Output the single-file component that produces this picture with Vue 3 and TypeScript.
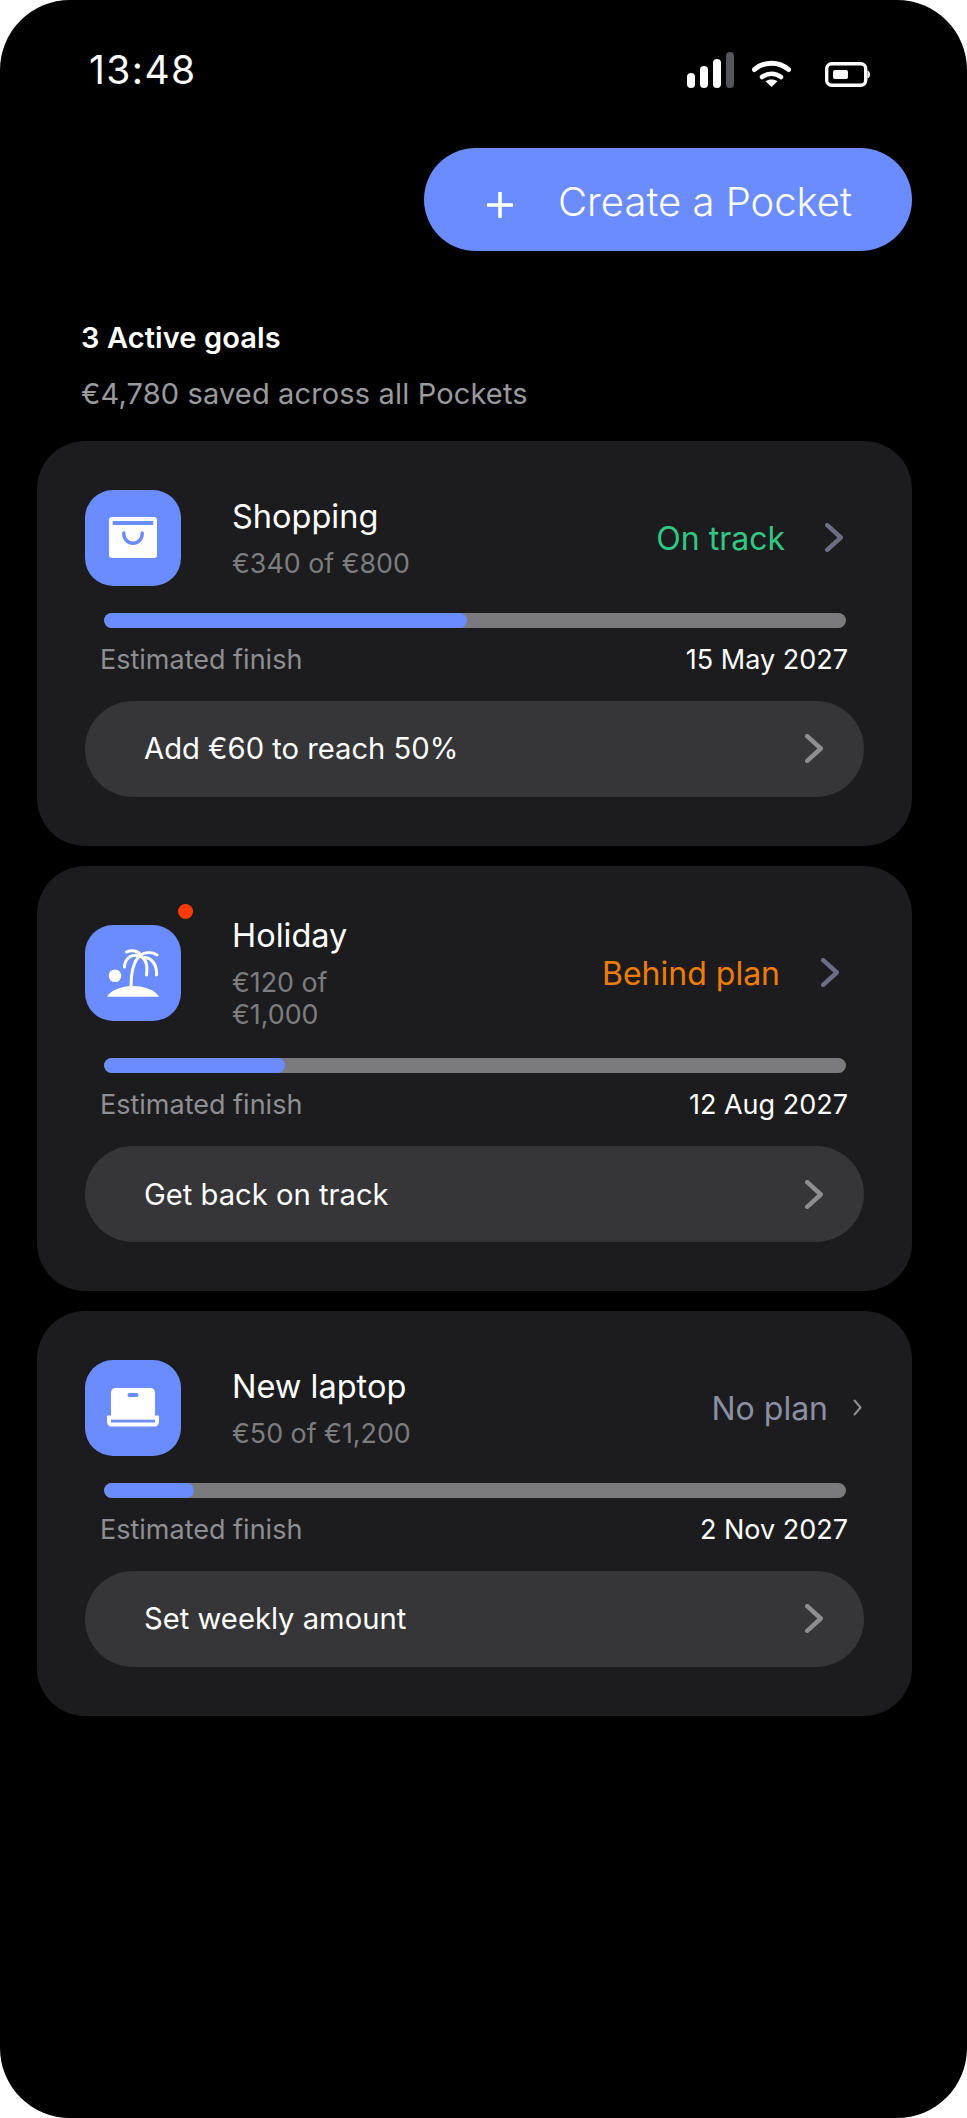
<template>
  <div class="phone">
    <!-- Status bar -->
    <div class="status-bar">
      <span class="clock">13:48</span>
      <div class="status-icons">
        <div class="signal">
          <i class="sig sig-1"></i>
          <i class="sig sig-2"></i>
          <i class="sig sig-3"></i>
          <i class="sig sig-4"></i>
        </div>
        <svg class="wifi" width="39" height="29" viewBox="0 0 39 29" fill="none">
          <path d="M2.5 11.5C12 3 27 3 36.5 11.5" stroke="#fff" stroke-width="5" stroke-linecap="round" />
          <path d="M10 19C15.500 14.500 23.500 14.500 29 19" stroke="#fff" stroke-width="4.500" stroke-linecap="round" />
          <path d="M19.500 29L13.500 23.300C17 20.800 22 20.800 25.500 23.300Z" fill="#fff" />
        </svg>
        <svg class="battery" width="45" height="25" viewBox="0 0 45 25" fill="none">
          <rect x="1.700" y="1.700" width="39" height="21.600" rx="5" stroke="#fff" stroke-width="3.400" />
          <rect x="8" y="8" width="15" height="9" rx="2" fill="#fff" />
          <path d="M42.500 8.500C44.500 9.500 45 11 45 12.500S44.500 15.500 42.500 16.500Z" fill="#fff" />
        </svg>
      </div>
    </div>

    <div class="actions">
      <button class="create-btn">
        <svg class="plus" width="26" height="26" viewBox="0 0 26 26" fill="none">
          <path d="M13 1V25M1 13H25" stroke="#fff" stroke-width="3.600" stroke-linecap="round" />
        </svg>
        <span>Create a Pocket</span>
      </button>
    </div>

    <div class="summary">
      <p class="summary-title">3 Active goals</p>
      <p class="summary-sub">€4,780 saved across all Pockets</p>
    </div>

    <div class="cards">
      <section v-for="goal in goals" :key="goal.name" class="card">
        <div class="card-head">
          <div class="goal-icon">
            <span v-if="goal.alert" class="alert-dot"></span>
            <svg v-if="goal.icon === 'bag'" width="48" height="41" viewBox="0 0 48 41">
              <rect width="48" height="41" rx="3" fill="#fff" />
              <rect x="3.700" y="4" width="40.500" height="4" fill="#6b8cff" />
              <path d="M14.800 16V17A9.200 9.200 0 0 0 33.200 17V16" fill="none" stroke="#6b8cff" stroke-width="3.400" stroke-linecap="round" />
            </svg>
            <svg v-else-if="goal.icon === 'palm'" width="52" height="48" viewBox="0 0 52 48" fill="none">
              <circle cx="8" cy="26.700" r="6.300" fill="#fff" />
              <path d="M0 47.800C2.500 42 14 37 26 37S49.500 42 52 47.800Z" fill="#fff" />
              <g stroke="#fff" stroke-width="3" stroke-linecap="round">
                <path d="M24 37C24 24 26 14 32 7" />
                <path d="M31 6.500C23 5 17.500 11 17.500 18" />
                <path d="M19.500 3C25 0.500 31 1.500 34 6.500" />
                <path d="M31 6.500C38 8 41 15 39.500 26" />
                <path d="M33 6.500C37 3 45 2.500 50 6" />
                <path d="M38 8.500C45 9 50 16 49.500 26" />
              </g>
            </svg>
            <svg v-else width="52" height="39" viewBox="0 0 52 39">
              <path d="M4 31V4.500A4.500 4.500 0 0 1 8.500 0H43.500A4.500 4.500 0 0 1 48 4.500V31Z" fill="#fff" />
              <rect x="20.500" y="5" width="11" height="4" rx="2" fill="#6b8cff" />
              <path d="M0 28.500A1 1 0 0 1 1 27.500H51A1 1 0 0 1 52 28.500V34A4.500 4.500 0 0 1 47.500 38.500H4.500A4.500 4.500 0 0 1 0 34Z" fill="#fff" />
              <rect x="4" y="31.700" width="44" height="2.800" fill="#6b8cff" />
            </svg>
          </div>

          <div class="goal-text">
            <h3 class="goal-name">{{ goal.name }}</h3>
            <p class="goal-amount">{{ goal.amount }}</p>
          </div>

          <div class="goal-state" :class="'state-' + goal.state">
            <span class="state-label">{{ goal.label }}</span>
            <svg v-if="goal.state === 'none'" class="chev-small" width="9" height="17" viewBox="0 0 9 17" fill="none">
              <path d="M1.500 1.500L7.500 8.500L1.500 15.500" stroke="#8e8e90" stroke-width="2" stroke-linecap="round" stroke-linejoin="round" />
            </svg>
            <svg v-else class="chev" width="18" height="29" viewBox="0 0 18 29" fill="none">
              <path d="M2.200 2.200L15.800 14.500L2.200 26.800" stroke="#6d6d85" stroke-width="4.400" stroke-linecap="round" stroke-linejoin="round" />
            </svg>
          </div>
        </div>

        <div class="track">
          <div class="track-fill" :style="{ width: goal.progress + '%' }"></div>
        </div>

        <div class="finish-row">
          <span class="finish-label">Estimated finish</span>
          <span class="finish-date">{{ goal.finish }}</span>
        </div>

        <button class="action-pill">
          <span>{{ goal.action }}</span>
          <svg width="18" height="29" viewBox="0 0 18 29" fill="none">
            <path d="M2.200 2.200L15.800 14.500L2.200 26.800" stroke="#8e8e90" stroke-width="4.400" stroke-linecap="round" stroke-linejoin="round" />
          </svg>
        </button>
      </section>
    </div>
  </div>
</template>

<script setup lang="ts">
interface Goal {
  name: string;
  amount: string;
  label: string;
  state: 'track' | 'behind' | 'none';
  icon: 'bag' | 'palm' | 'laptop';
  progress: number;
  finish: string;
  action: string;
  alert?: boolean;
}

const goals: Goal[] = [
  {
    name: 'Shopping',
    amount: '€340 of €800',
    label: 'On track',
    state: 'track',
    icon: 'bag',
    progress: 49,
    finish: '15 May 2027',
    action: 'Add €60 to reach 50%',
  },
  {
    name: 'Holiday',
    amount: '€120 of\n€1,000',
    label: 'Behind plan',
    state: 'behind',
    icon: 'palm',
    progress: 24.500,
    finish: '12 Aug 2027',
    action: 'Get back on track',
    alert: true,
  },
  {
    name: 'New laptop',
    amount: '€50 of €1,200',
    label: 'No plan',
    state: 'none',
    icon: 'laptop',
    progress: 12.200,
    finish: '2 Nov 2027',
    action: 'Set weekly amount',
  },
];
</script>

<style>
html,
body {
  margin: 0;
  background: #fff;
}
</style>

<style scoped>
.phone {
  box-sizing: border-box;
  width: 967px;
  height: 2118px;
  padding: 0 55px 0 37px;
  background: #000;
  border-radius: 70px;
  overflow: hidden;
  font-family: Inter, "Liberation Sans", sans-serif;
  color: #fff;
}

.status-bar {
  display: flex;
  align-items: flex-start;
  justify-content: space-between;
  height: 148px;
  padding-left: 52px;
  padding-right: 42px;
}

.clock {
  margin-top: 46px;
  font-size: 39px;
  line-height: 48px;
  font-weight: 400;
  letter-spacing: 1.400px;
}

.status-icons {
  display: flex;
  align-items: flex-end;
  margin-top: 52px;
  height: 36px;
}

.signal {
  display: flex;
  align-items: flex-end;
  gap: 5px;
}

.sig {
  display: block;
  width: 8px;
  border-radius: 4px;
  background: #fff;
}

.sig-1 { height: 15px; }
.sig-2 { height: 22px; }
.sig-3 { height: 29px; }
.sig-4 { height: 36px; background: #55555c; }

.wifi {
  margin-left: 18px;
  margin-bottom: 1px;
}

.battery {
  margin-left: 34px;
  margin-bottom: 1px;
}

.actions {
  display: flex;
  justify-content: flex-end;
}

.create-btn {
  display: flex;
  align-items: center;
  gap: 45px;
  width: 488px;
  height: 103px;
  padding: 4px 0 0 63px;
  border: 0;
  border-radius: 52px;
  background: #6b8cff;
  color: #fff;
  font-family: inherit;
  font-size: 40px;
  font-weight: 300;
}

.plus {
  margin-top: 6px;
}

.summary {
  padding: 69px 0 0 44px;
}

.summary-title {
  margin: 0;
  font-size: 29px;
  line-height: 36px;
  font-weight: 600;
  letter-spacing: 0.100px;
}

.summary-sub {
  margin: 20px 0 0;
  font-size: 29px;
  line-height: 36px;
  letter-spacing: 0.150px;
  color: #9a9a9e;
}

.cards {
  display: flex;
  flex-direction: column;
  gap: 20px;
  margin-top: 29px;
}

.card {
  padding: 48.500px 48px 49px;
  background: #1c1c1e;
  border-radius: 48px;
}

.card-head {
  display: flex;
  align-items: center;
  margin-bottom: 27px;
}

.goal-icon {
  position: relative;
  display: flex;
  flex: none;
  align-items: center;
  justify-content: center;
  width: 96px;
  height: 96px;
  border-radius: 28px;
  background: #6b8cff;
}

.alert-dot {
  position: absolute;
  top: -21px;
  right: -12px;
  width: 15px;
  height: 15px;
  border-radius: 50%;
  background: #ff3b0a;
}

.goal-text {
  flex: 1;
  margin-left: 51px;
  padding-top: 2px;
}

.goal-name {
  margin: 0;
  font-size: 32.500px;
  line-height: 40px;
  font-weight: 400;
}

.goal-amount {
  margin: 9.500px 0 1.500px;
  font-size: 26.800px;
  line-height: 32px;
  color: #7d7d7f;
  white-space: pre-line;
}

.goal-state {
  display: flex;
  align-items: center;
}

.state-label {
  margin-top: 2px;
  font-size: 32px;
  line-height: 40px;
}

.state-track { color: #2fc984; margin-right: 21px; }
.state-track .chev { margin-left: 40px; }

.state-behind { color: #f07d00; margin-right: 25px; }
.state-behind .chev { margin-left: 41px; }

.state-none { color: #8c8ea3; margin-right: 2px; }
.state-none .chev-small { margin-left: 25px; }

.track {
  height: 15px;
  margin: 0 18px 0 18.500px;
  border-radius: 8px;
  background: #7b7a7e;
  overflow: hidden;
}

.track-fill {
  height: 100%;
  border-radius: 8px;
  background: #6b8cff;
}

.finish-row {
  display: flex;
  align-items: center;
  justify-content: space-between;
  height: 36px;
  margin: 13.500px 16px 23.500px 15px;
  font-size: 27px;
}

.finish-label {
  color: #8e8e93;
}

.action-pill {
  display: flex;
  align-items: center;
  justify-content: space-between;
  box-sizing: border-box;
  width: 100%;
  height: 96px;
  padding: 0 41px 0 59px;
  border: 0;
  border-radius: 48px;
  background: #363639;
  color: #fff;
  font-family: inherit;
  font-size: 29.200px;
  font-weight: 400;
}
</style>
